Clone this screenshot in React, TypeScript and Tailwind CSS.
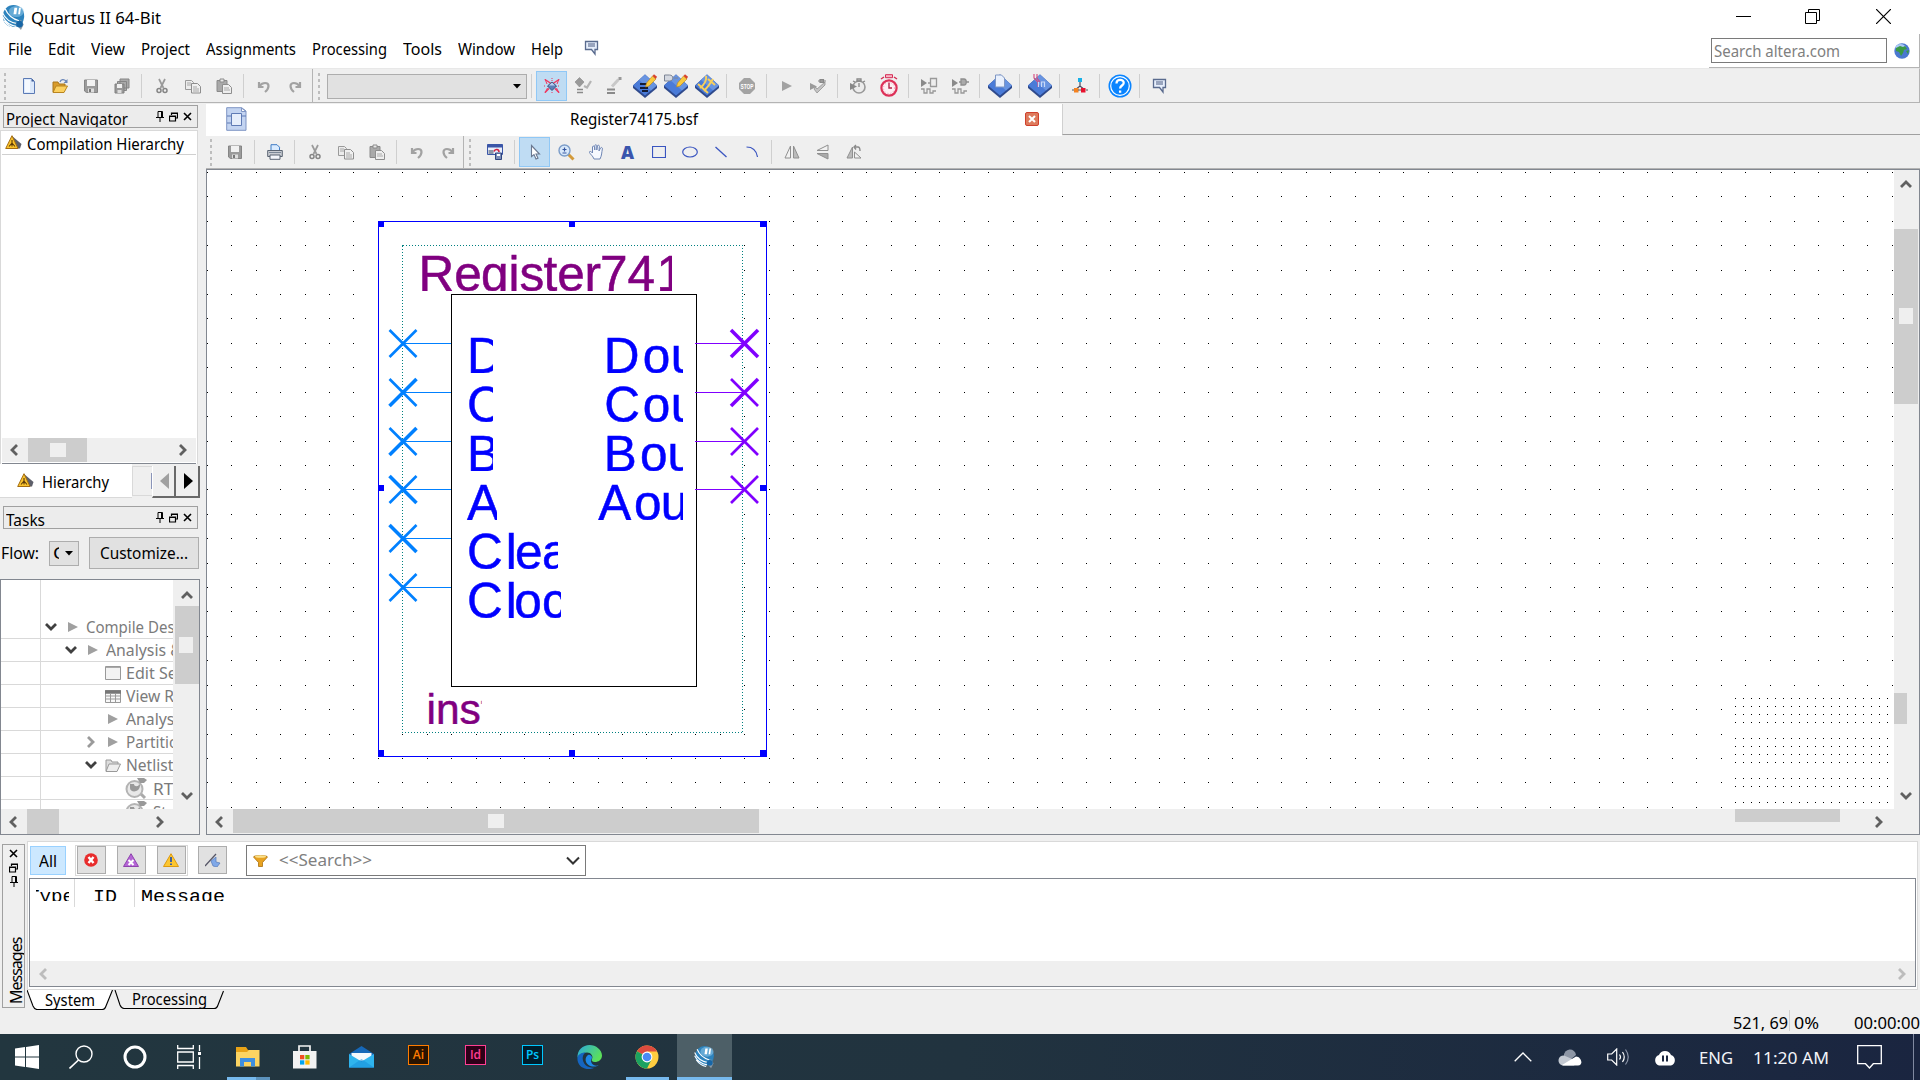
import { useLayoutEffect, useRef, type ReactNode } from "react";

const UI = "font-['Noto_Sans',sans-serif] text-[16.5px]";

/** Single line of text squeezed or stretched to a known width. */
function T({ w, c = "", f = UI, children }: { w: number; c?: string; f?: string; children: string }) {
  const ref = useRef<HTMLSpanElement>(null);
  useLayoutEffect(() => {
    const el = ref.current;
    if (el && el.offsetWidth) el.style.transform = `scaleX(${w / el.getBoundingClientRect().width})`;
  }, [w]);
  return (
    <span className={"block shrink-0 leading-[20px] h-[20px] " + f + " " + c} style={{ width: w }}>
      <span ref={ref} className="inline-block origin-left whitespace-pre">{children}</span>
    </span>
  );
}

function Ic({ w = 16, h = 16, vb, children, c = "" }: { w?: number; h?: number; vb?: string; children: ReactNode; c?: string }) {
  return (
    <svg width={w} height={h} viewBox={vb ?? `0 0 ${w} ${h}`} className={"block shrink-0 " + c} fill="none">
      {children}
    </svg>
  );
}

const Cell = ({ children, on }: { children: ReactNode; on?: boolean }) => (
  <div className={"flex h-[30px] w-[31px] shrink-0 items-center justify-center " + (on ? "border border-[#90c8f6] bg-[#bfdcf3]" : "")}>{children}</div>
);
const Sep = () => (
  <div className="flex w-[9px] shrink-0 justify-center"><div className="h-[24px] w-px bg-[#cfcfcf]" /></div>
);
const Grip = () => (
  <div className="flex w-[3px] shrink-0 flex-col gap-[3px]">
    {[0, 1, 2, 3, 4].map((i) => <div key={i} className="h-[3px] w-[2px] bg-[#bdbdbd]" />)}
  </div>
);

const Chevron = ({ d, color = "#606060" }: { d: "l" | "r" | "u" | "d"; color?: string }) => {
  const p = { l: "M11 2 6 7l5 5", r: "M4 2l5 5-5 5", u: "M2 10l5-5 5 5", d: "M2 4l5 5 5-5" }[d];
  return <Ic w={14} h={14}><path d={p} stroke={color} strokeWidth="2.8" /></Ic>;
};

const NewIcon = () => <Ic><path d="M2.5.5h8l3 3v12h-11z" fill="#dce9fb" stroke="#5b7ab5" /><path d="M4 2h5v12H4z" fill="#fff" opacity=".7" /><path d="M10.5.5v3h3z" fill="#3f5e9c" /></Ic>;
const OpenIcon = () => <Ic><path d="M1 14V4h5l1 2h6v3" fill="#d99b2a" stroke="#a8761c" /><path d="M1 14.5 4 8h11.5L12 14.5z" fill="#fbd060" stroke="#b98520" /><path d="M8 4c1-3 4-3 6-1" stroke="#6a86b8" strokeWidth="1.3" /><path d="M15.5 1v4h-4z" fill="#6a86b8" /></Ic>;
const SaveIcon = () => <Ic><path d="M1.500 2h13v12.500h-11l-2-1.500z" fill="#9b9b9b" stroke="#858585" /><path d="M4 2h8v6H4z" fill="#f2f2f2" /><path d="M5 10.500h6v4H5z" fill="#dedede" /><path d="M6 11h2v3H6z" fill="#777" /></Ic>;
const SaveAllIcon = () => <Ic><path d="M6 1h9v9H6zM3.500 3.500h9v9h-9z" fill="#aaa" stroke="#858585" /><path d="M1 6h9v9H1z" fill="#999" stroke="#808080" /><path d="M3 6h5v4H3z" fill="#f0f0f0" /><path d="M3.500 12h4v3h-4z" fill="#ddd" /></Ic>;
const CutIcon = () => <Ic c="ml-px"><path d="M5 1l4.500 9M11 1 6.500 10" stroke="#9a9a9a" strokeWidth="1.700" /><circle cx="5" cy="12.500" r="2" stroke="#858585" strokeWidth="1.500" /><circle cx="11" cy="12.500" r="2" stroke="#858585" strokeWidth="1.500" /></Ic>;
const CopyIcon = () => <Ic c="ml-px"><path d="M.5 2.500h6l2 2v7h-8z" fill="#ececec" stroke="#9a9a9a" /><path d="M6.500 5.500h6l3 3v6.500h-9z" fill="#f0f0f0" stroke="#8e8e8e" /><path d="M2 5h4M2 7h4M8 9h4M8 11h6M8 13h6" stroke="#a8a8a8" /></Ic>;
const PasteIcon = () => <Ic><path d="M1 2.500h10v11H1z" fill="#a9a9a9" stroke="#8a8a8a" /><path d="M4 1h4v3H4z" fill="#e8e8e8" stroke="#8a8a8a" /><path d="M6.500 6.500h6l3 3v6h-9z" fill="#eee" stroke="#8e8e8e" /><path d="M8 10h5M8 12h6" stroke="#aaa" /></Ic>;
const UndoIcon = () => <Ic><path d="M3 4v5h4.500M3.500 8c3-4 9-4 9 0 0 2-1 4-3.500 6" stroke="#a2a2a2" strokeWidth="2.200" /></Ic>;
const RedoIcon = () => <Ic><path d="M13 4v5H8.500M12.500 8c-3-4-9-4-9 0 0 2 1 4 3.500 6" stroke="#a2a2a2" strokeWidth="2.200" /></Ic>;
const ChatIcon = () => <Ic><path d="M1.500 1.500h12v8h-2.500v4.500L7.500 9.500h-6z" fill="#e6eefb" stroke="#5a6b8e" strokeWidth="1.300" /><path d="M4 4h7M4 6h7" stroke="#4a5a80" /></Ic>;
const StarIcon = () => <Ic><path d="M1 1.500l6 4M15 1.500l-6 4M1 14.500l4-4M15 14.500l-4-4" stroke="#ee3860" strokeWidth="1.500" /><path d="M1 1l2 5M15 1l-2 5M1 15l2.500-5M15 15l-2.500-5" stroke="#ee3860" /><path d="M8 0v3M8 14v2M0 8h2M14 8h2" stroke="#e8345a" strokeDasharray="1 1" /><path d="M3.500 8 8 4l4.500 4L8 12.500z" fill="#5d7fb8" stroke="#39537e" /><path d="M5 7.500 8 4.500l3 3z" fill="#bcd0f0" /></Ic>;
const GrayGem = () => <Ic w={18} h={20}><path d="M1 6 5.500 1.500 10 6 5.500 11z" fill="#999" stroke="#888" strokeWidth=".6" /><path d="M10 10l3 1.500L17 5" stroke="#b4b4b4" strokeWidth="2.200" /><path d="M3 13.500h6M3 16.500h6" stroke="#8a8a8a" strokeWidth="1.500" /></Ic>;
const GrayPen = () => <Ic w={18} h={20}><path d="M7 10.500l6.500-7" stroke="#c8c8c8" strokeWidth="3" /><path d="M13.500 2.500h3" stroke="#999" strokeWidth="3" /><path d="M2 13.500h8M2 17h8" stroke="#8a8a8a" strokeWidth="2" /></Ic>;
const Gem = ({ children }: { children?: ReactNode }) => (
  <Ic w={24} h={24}>
    <path d="M0 11.500 12 .5l12 11V14L12 24 0 14z" fill="#2f4a8c" />
    <path d="M0 11.500 12 .5l12 11L12 21.500z" fill="#4a7bd8" />
    <path d="M12 .5l12 11-6 5L6 6z" fill="#86ade9" opacity=".5" />
    {children}
  </Ic>
);
const Pencil = () => <><path d="M12.500 13l1-4 6-7 3.500 3-7 7z" fill="#f9c93e" stroke="#b5831b" strokeWidth=".6" /><path d="M19.500 2 21 .3l3 2.500L22.800 5z" fill="#d8432c" /></>;
const StopIcon = () => <Ic><path d="M5 0h6l5 5v6l-5 5H5l-5-5V5z" fill="#a3a3a3" /><text x="8" y="11" fontSize="7.500" fontWeight="bold" textAnchor="middle" textLength="13" lengthAdjust="spacingAndGlyphs" fill="#fff" fontFamily="Liberation Sans">STOP</text></Ic>;
const PlayIcon = () => <Ic w={12} h={12}><path d="M1 1l10 5L1 11z" fill="#a2a2a2" /></Ic>;
const CheckGray = () => <Ic><path d="M0 5l7 3.500L0 12z" fill="#9a9a9a" /><path d="M4 11l3 4 8-8V4l-8 7-1.500-2z" fill="#c4c4c4" stroke="#888" strokeWidth=".7" /><path d="M8 3h2M14 3h2M10 1.500h3.500v3H10z" fill="#999" stroke="#888" strokeWidth="1.200" /></Ic>;
const WatchGray = () => <Ic><circle cx="9" cy="9" r="6" fill="#ececec" stroke="#999" strokeWidth="1.600" /><path d="M9 5v4M7 1h4v2H7zM3 3l2 1M15 3l-2 1" stroke="#888" strokeWidth="1.300" /><path d="M0 5l7 3.500L0 12z" fill="#888" /></Ic>;
const Stopwatch = () => <Ic w={18} h={24}><path d="M5.500.7h7v3h-7z" fill="#f8b8c8" stroke="#d42c54" /><path d="M1 5l3-2M17 5l-3-2" stroke="#d42c54" strokeWidth="1.500" /><circle cx="9" cy="14" r="7.600" fill="#fdeef2" stroke="#dd3158" strokeWidth="2.200" /><path d="M9 8.500V14h3" stroke="#b32348" strokeWidth="1.400" /><circle cx="9" cy="14" r="5.500" stroke="#e6a0b2" strokeDasharray="1 2" /></Ic>;
const SimA = ({ plug }: { plug?: boolean }) => <Ic w={18} h={18}><path d="M1 2l6 4-6 4z" fill="#8a8a8a" />{plug ? <path d="M8 5h2M15 5h3M10 2h3c3 0 3 6 0 6h-3z" fill="#aaa" stroke="#8e8e8e" strokeWidth="1.300" /> : <path d="M8 6h3M10.500 1.500h6v8h-6z" fill="#eee" stroke="#999" strokeWidth="1.300" />}<path d="M1 12h3v4h3v-4h3v4h3v-2h3" stroke="#999" strokeWidth="1.300" /></Ic>;
const NodesIcon = () => <Ic><path d="M8 3v5M3 12l5-4 5 4" stroke="#4a4a60" strokeWidth="1.200" /><path d="M6 0h4v4H6z" fill="#16b0e8" /><path d="M2 10h4.500v4.500H2z" fill="#f58220" /><path d="M9 10h4.500v4.500H9z" fill="#e8112d" /><path d="M0 12h2M6 12h3M14 12h2" stroke="#555" /></Ic>;
const HelpIcon = () => <Ic w={24} h={24}><circle cx="12" cy="12" r="11.500" fill="#0a84ff" /><circle cx="12" cy="12" r="9.300" stroke="#fff" strokeWidth="1.200" /><path d="M8.500 9.500c0-5 7.500-4.500 7.200-.5-.2 2.500-3.500 2.600-3.600 5.500M12.100 16.500v2.300" stroke="#fff" strokeWidth="2.300" /></Ic>;
const PrintIcon = () => <Ic><path d="M4 6V.7h6l2.500 2.500V6" fill="#d9ebff" stroke="#3f7cc4" /><path d="M.7 6.500h14.600v6H.7z" fill="#c9ccd2" stroke="#5a6472" /><path d="M3 11h10v4.300H3z" fill="#f4f6fa" stroke="#5a6472" /><path d="M2 8.500h12" stroke="#7b8796" /></Ic>;
const WinIcon = () => <Ic><path d="M.5.5h15v10H.5z" fill="#e8eefb" stroke="#3b56a8" /><path d="M.5.5h15v3H.5z" fill="#3b56a8" /><path d="M1.500 6h5v4h-5z" fill="#8d97a8" /><path d="M7 7.500c1-3 5-2.500 5 .5" stroke="#d02040" strokeWidth="1.600" /><path d="M9.500 9h5v6.500h-6V9z" fill="#7d8fb8" stroke="#2f4580" /><path d="M10 10h3v2h-3z" fill="#fff" /></Ic>;
const PointerIcon = () => <Ic c="ml-px"><path d="M4.500 1.500v11l2.500-2 2 4.500 2-.8-2-4.200h3.500z" fill="#fff" stroke="#6a7890" strokeWidth="1.100" /></Ic>;
const ZoomIcon = () => <Ic w={17} h={17} c="ml-px"><path d="M10 10l5.500 5.500" stroke="#d39a3a" strokeWidth="3" /><circle cx="6.500" cy="6.500" r="5.500" fill="#d8e8fa" stroke="#7b9cc8" strokeWidth="1.400" /><path d="M6.500 3.500v4M4.500 5.500h4M4.500 9h4" stroke="#3556a0" strokeWidth="1.200" /></Ic>;
const HandIcon = () => <Ic c="ml-px"><path d="M5 15c-1-3-4-5-4.500-6.500C0 7 2 7 3.500 9V3c0-1.200 1.700-1.200 2 0l.3 3V1.700c0-1.300 1.900-1.300 2 0V6l.6-4c.2-1.200 2-1 2 .3L10 7l1.500-3c.6-1 2.200-.5 1.900.8C12.500 9 13 11 11 15z" fill="#f6f9ff" stroke="#6f86b4" /></Ic>;
const FlipH = () => <Ic><path d="M6.500 2v12H1z" fill="#f2f2f2" stroke="#909090" /><path d="M9.500 2v12H15z" fill="#bbb" stroke="#909090" /></Ic>;
const FlipV = () => <Ic><path d="M13 1v5.500H2z" fill="#f2f2f2" stroke="#909090" /><path d="M13 15V9.500H2z" fill="#aaa" stroke="#909090" /></Ic>;
const RotIcon = () => <Ic><path d="M6.500 3v11H1z" fill="#bbb" stroke="#909090" /><path d="M8.500 8v6H15z" fill="#f2f2f2" stroke="#909090" /><path d="M8 3h4c2 0 2 2 2 4M10 1 8 3l2 2.500" stroke="#8a8a8a" strokeWidth="1.400" /></Ic>;
const FlagTriangle = () => <Ic w={17} h={15}><path d="M7 1l9.500 8-1.500 4.500H9z" fill="#5d5f6a" /><path d="M7 .7 13 13.500H.7z" fill="#fbc42c" stroke="#a36c10" /><path d="M7 5v3l-3 3.500M7 8l3 3.500M7 8v3.500" stroke="#5c3a08" strokeWidth="1.100" /></Ic>;
const Globe = () => <Ic><circle cx="8" cy="8" r="7.700" fill="#4a78d0" /><ellipse cx="6.500" cy="4.500" rx="5" ry="3.500" fill="#a9c8f4" /><path d="M2 5l4-2 3 1 2-1 2 3-3 1-1 3-2 3-2-4-3-1z" fill="#3a9a44" /><path d="M12 8l3-1-1 4z" fill="#3a9a44" /></Ic>;
const QuartusLogo = ({ w = 24, h = 28 }: { w?: number; h?: number }) => (
  <Ic w={w} h={h} vb="0 0 24 28">
    <ellipse cx="12" cy="12" rx="11.500" ry="12" fill="#2d83bd" />
    <ellipse cx="15" cy="7" rx="8" ry="6" fill="#7cb9e0" opacity=".7" />
    <path d="M0 8c3 7 8 11 16 12M0 12c3 6 8 10 15 11M2 17c3 4 7 7 12 8M3 4c3 7 8 11 15 13" stroke="#fff" strokeWidth="1.300" />
    <path d="M13 3h3l-1 7h-3zM18 3h2l-1 7h-2z" fill="#fff" />
    <path d="M14 20l6-4 3 5-3 6z" fill="#8c9aa6" /><circle cx="18.500" cy="20.500" r="3.600" fill="#1766a6" />
  </Ic>
);
const PinI = () => <Ic w={8} h={11}><path d="M2 .5h4.500v6H2zM0 6.500h8M4 7v4" stroke="#000" /><path d="M5.500 1v5" stroke="#000" /></Ic>;
const FloatI = () => <Ic w={9} h={10}><path d="M2.500 3V1h6v5H7M2.500 1.500h6M.5 4h6v5h-6zM.5 4.500h6" stroke="#000" strokeWidth="1.200" /></Ic>;
const XI = () => <Ic w={9} h={9}><path d="M1 1l7 7M8 1 1 8" stroke="#000" strokeWidth="1.600" /></Ic>;

function DockTitle({ title, w }: { title: string; w: number }) {
  return (
    <div className="ml-[3px] flex h-[23px] w-[195px] items-start overflow-hidden border border-[#a0a0a0] bg-[#ececec] pl-[2px]">
      <T w={w} c="mt-[3px]">{title}</T>
      <div className="ml-auto mr-[5px] mt-[5px] flex items-center gap-[5px]"><PinI /><FloatI /><XI /></div>
    </div>
  );
}

const menu: [string, number][] = [["File", 24], ["Edit", 27], ["View", 34], ["Project", 49], ["Assignments", 90], ["Processing", 75], ["Tools", 39], ["Window", 57], ["Help", 32]];

function MainToolbar() {
  return (
    <div className="flex h-[35px] items-center border-t border-b border-t-[#e8e8e8] border-b-[#b4b4b4] border-r border-r-[#b4b4b4] bg-[#efefef] pt-px">
      <div className="ml-[4px]"><Grip /></div>
      <div className="ml-[6px] flex items-center">
        <Cell><NewIcon /></Cell><Cell><OpenIcon /></Cell><Cell><SaveIcon /></Cell><Cell><SaveAllIcon /></Cell><Sep />
        <Cell><CutIcon /></Cell><Cell><CopyIcon /></Cell><Cell><PasteIcon /></Cell><Sep />
        <Cell><UndoIcon /></Cell><Cell><RedoIcon /></Cell>
      </div>
      <div className="ml-[2px] h-[34px] w-px bg-[#b4b4b4]" />
      <div className="ml-[5px]"><Grip /></div>
      <div className="ml-[6px] flex h-[25px] w-[200px] items-center justify-end border border-[#adadad] bg-[#e1e1e1] pr-[5px]">
        <Ic w={8} h={5}><path d="M0 0h8L4 4.500z" fill="#000" /></Ic>
      </div>
      <Sep />
      <Cell on><StarIcon /></Cell><Cell><GrayGem /></Cell><Cell><GrayPen /></Cell>
      <Cell><Gem><path d="M7 10h8M7 14h8M9 17h6" stroke="#141c34" strokeWidth="1.800" /><Pencil /></Gem></Cell>
      <Cell><Gem><path d="M.5 1h5c4.500 0 4.500 6 0 6h-5zM10 4h4" fill="#d4d8e0" stroke="#7c8494" /><Pencil /></Gem></Cell>
      <Cell><Gem><path d="M3 10l10 9M13 5l7 6M11 2c1 5-1 8-6 12M18 5c-3 5-5 8-9 12" stroke="#f8cf5c" strokeWidth="2" /></Gem></Cell>
      <Sep /><Cell><StopIcon /></Cell><Sep /><Cell><PlayIcon /></Cell><Cell><CheckGray /></Cell>
      <Sep /><Cell><WatchGray /></Cell><Cell><Stopwatch /></Cell>
      <Sep /><Cell><SimA /></Cell><Cell><SimA plug /></Cell>
      <Sep /><Cell><Gem><path d="M7.500 1h6l3 3v9h-9z" fill="#eaf1fd" stroke="#7f97c4" /></Gem></Cell>
      <Sep /><Cell><Gem><path d="M6 0v4l4 4v5M9 0v4l3 4" stroke="#d4487c" strokeWidth="1.100" /><path d="M10.500 8v5M13.500 13V8h3v5" stroke="#c7d9f8" strokeWidth="1.200" /></Gem></Cell>
      <Sep /><Cell><NodesIcon /></Cell><Sep /><Cell><HelpIcon /></Cell><Sep /><Cell><ChatIcon /></Cell>
    </div>
  );
}

type TaskRow = { label: string; w: number; open?: "d" | "r"; pad: string; icon: ReactNode };
const Tri = () => <Ic w={12} h={12} c="mr-[3px]"><path d="M1 1l10 5L1 11z" fill="#a0a0a0" /></Ic>;
const rows: TaskRow[] = [
  { label: "Compile Design", w: 111, open: "d", pad: "pl-[3px]", icon: <Tri /> },
  { label: "Analysis & Synthesis", w: 150, open: "d", pad: "pl-[23px]", icon: <Tri /> },
  { label: "Edit Settings", w: 94, pad: "pl-[43px]", icon: <Ic w={16} h={14} c="mr-[3px]"><path d="M.5.5h15v13H.5z" fill="#f3f3f3" stroke="#999" /><path d="M1 1.500h14" stroke="#aaa" /></Ic> },
  { label: "View Report", w: 88, pad: "pl-[43px]", icon: <Ic w={16} h={13} c="mr-[3px]"><path d="M.5.5h15v12H.5z" fill="#f8f8f8" stroke="#999" /><path d="M0 2h16" stroke="#777" strokeWidth="3.500" /><path d="M1 6h14M1 9h14M5.500 4v9M10.500 4v9" stroke="#999" /></Ic> },
  { label: "Analysis & Elaboration", w: 165, pad: "pl-[43px]", icon: <Tri /> },
  { label: "Partition Merge", w: 112, open: "r", pad: "pl-[43px]", icon: <Tri /> },
  { label: "Netlist Viewers", w: 108, open: "d", pad: "pl-[43px]", icon: <Ic w={16} h={13} c="mr-[3px]"><path d="M1 12V1h5l1 2h6v2" fill="#ddd" stroke="#999" /><path d="M1 12.500 4 5h11.500L12 12.500z" fill="#eee" stroke="#999" /></Ic> },
];
const Lens = () => <Ic w={22} h={22}><path d="M14 15l6 6" stroke="#aaa" strokeWidth="3" /><circle cx="9.500" cy="12" r="8" fill="#e8e8e8" stroke="#b4b4b4" strokeWidth="2" /><path d="M5 7h4c0 3 5 3 5 0l1 1c0 8-10 8-10 3z" fill="#999" /><path d="M12 1h7l3 2-3 3h-4z" fill="#999" /></Ic>;

function LeftDock() {
  return (
    <div className="flex h-full w-[206px] shrink-0 flex-col pt-[2px]">
      <DockTitle title="Project Navigator" w={122} />
      <div className="mt-[2px] flex h-[334px] w-[198px] flex-col border border-b-0 border-[#d9d9d9] bg-white px-px">
        <div className="flex h-[24px] items-center border-b border-[#d0d0d0] pl-[3px]">
          <FlagTriangle /><T w={157} c="ml-[5px] mt-[2px]">Compilation Hierarchy</T>
        </div>
        <div className="mt-auto flex h-[24px] items-center bg-[#efefef]">
          <div className="w-[26px] pl-[4px]"><Chevron d="l" /></div>
          <div className="flex h-full w-[59px] items-center justify-center bg-[#cdcdcd]"><div className="h-[14px] w-[16px] bg-[#efefef]" /></div>
          <div className="ml-auto mr-[6px]"><Chevron d="r" /></div>
        </div>
        <div className="mt-px h-px bg-[#828790]" />
      </div>
      <div className="flex h-[34px] w-[200px]">
        <div className="flex w-[132px] items-center border-b border-[#d9d9d9] bg-white pl-[17px]"><FlagTriangle /><T w={67} c="ml-[8px] mt-[2px]">Hierarchy</T></div>
        <div className="mt-[2px] flex h-[30px] w-[20px] items-center justify-end border border-r-0 border-[#d9d9d9]"><div className="h-[16px] w-px bg-[#8a94b8]" /></div>
        <div className="mt-[2px] flex w-[24px] items-center justify-center border-r-2 border-b-2 border-l border-[#696969] border-l-white pl-px"><Ic w={9} h={16}><path d="M9 0v16L0 8z" fill="#a0a0a0" /></Ic></div>
        <div className="mt-[2px] flex w-[24px] items-center justify-center border-r-2 border-b-2 border-[#696969] pl-[2px]"><Ic w={9} h={16}><path d="M0 0v16l9-8z" fill="#000" /></Ic></div>
      </div>
      <div className="h-[8px]" />
      <DockTitle title="Tasks" w={39} />
      <div className="mt-[8px] flex h-[32px] items-center pl-[1px]">
        <T w={38}>Flow:</T>
        <div className="ml-[10px] flex h-[25px] w-[30px] items-center border border-[#adadad] bg-[#e1e1e1] pl-[3px]">
          <div className="w-[6px] overflow-hidden"><T w={12}>C</T></div>
          <Ic w={8} h={5} c="ml-[6px]"><path d="M0 0h8L4 4.500z" fill="#000" /></Ic>
        </div>
        <div className="ml-[10px] flex h-[32px] w-[110px] items-center justify-center border border-[#adadad] bg-[#e1e1e1]"><T w={88}>Customize...</T></div>
      </div>
      <div className="mt-[10px] flex h-[256px] w-[200px] flex-col border border-[#828790]">
        <div className="flex h-[229px]">
          <div className="flex h-full w-[172px] flex-col overflow-hidden bg-white">
            <div className="flex h-[36px] shrink-0"><div className="w-[40px] border-r border-[#d9d9d9]" /></div>
            {rows.map((r) => (
              <div key={r.label} className="flex h-[23px] shrink-0 border-b border-[#d9d9d9]">
                <div className="w-[40px] shrink-0 border-r border-[#d9d9d9]" />
                <div className={"flex items-center " + r.pad}>
                  <div className="w-[14px] shrink-0">
                    {r.open && <Chevron d={r.open} color={r.open === "d" ? "#404040" : "#9a9a9a"} />}
                  </div>
                  <div className="ml-[6px] flex w-[20px] shrink-0 items-center justify-center">{r.icon}</div>
                  <T w={r.w} c="ml-[2px] text-[#7b7b7b]">{r.label}</T>
                </div>
              </div>
            ))}
            {[["RTL Viewer", 88], ["State Machine", 100]].map(([l, w]) => (
              <div key={l} className="flex h-[23px] shrink-0 border-b border-[#d9d9d9]">
                <div className="w-[40px] shrink-0 border-r border-[#d9d9d9]" />
                <div className="flex items-center pl-[84px]"><Lens /><T w={w as number} c="ml-[6px] mt-px text-[#7b7b7b]">{l as string}</T></div>
              </div>
            ))}
          </div>
          <div className="ml-auto flex h-full w-[24px] flex-col items-center bg-[#efefef] pr-px">
            <div className="flex h-[26px] items-center pt-[3px]"><Chevron d="u" /></div>
            <div className="ml-px flex h-[78px] w-[24px] items-center justify-center bg-[#cdcdcd] pr-[2px]"><div className="h-[16px] w-[14px] bg-[#efefef]" /></div>
            <div className="mt-auto mb-[6px]"><Chevron d="d" /></div>
          </div>
        </div>
        <div className="flex h-[25px] items-center bg-[#efefef]">
          <div className="w-[26px] pl-[4px]"><Chevron d="l" /></div>
          <div className="h-full w-[32px] bg-[#cdcdcd]" />
          <div className="ml-auto mr-[32px]"><Chevron d="r" /></div>
        </div>
      </div>
    </div>
  );
}

const PITCH = 24.415;
const gridPath = (() => {
  let d = "";
  for (let i = 0; i <= 69; i++)
    for (let j = 0; j <= 26; j++) {
      const x = Math.round(207 + i * PITCH), y = Math.round(172 + j * PITCH);
      if (x >= 378 && x <= 744 && y >= 221 && y <= 733 && !(x === 744 && y > 221)) continue;
      if (x === 378 && y === 734) continue;
      if (x > 1730 && y > 697) continue;
      d += `M${x} ${y}h1v1h-1z`;
    }
  for (let x = 1735; x <= 1887; x += 8)
    for (const y of [698, 706, 714, 722, 738, 746, 754, 762, 778, 786, 802]) d += `M${x} ${y}h1v1h-1z`;
  return d;
})();

type Label = { t: string; xs: string; base: number; right: number; size?: number; color?: string };
const labels: Label[] = [
  { t: "Register741", xs: "418.5 454.3 481 508.500 519.6 543.6 557.2 584.5 600.1 627.5 656.5", base: 291, right: 672, size: 49.500, color: "#800080" },
  { t: "D", xs: "467", base: 373, right: 493 },
  { t: "C", xs: "467", base: 422, right: 493 },
  { t: "B", xs: "467", base: 471, right: 493 },
  { t: "A", xs: "467", base: 520, right: 497 },
  { t: "Clea", xs: "467 505.7 515 542", base: 569, right: 558 },
  { t: "Cloc", xs: "467 505.7 514.3 542", base: 618, right: 561 },
  { t: "Dou", xs: "603.8 642.7 670.8", base: 373, right: 683 },
  { t: "Cou", xs: "604.2 642.7 670.8", base: 422, right: 683 },
  { t: "Bou", xs: "603.8 640 667.5", base: 471, right: 683 },
  { t: "Aou", xs: "598.3 634 660.8", base: 520, right: 683 },
  { t: "inst", xs: "426.5", base: 724, right: 481.500, size: 42.500, color: "#800080" },
];
const inPins: [number, number, number][] = [[343, 2.600, 2.600], [392, 2.600, 3.500], [441, 2.600, 3.500], [489, 3.500, 2.600], [538, 3.500, 2.600], [587, 2.600, 2.600]];
const outPins: [number, number, number][] = [[343, 3.500, 3.500], [392, 2.600, 3.500], [441, 2.600, 2.600], [489, 2.600, 2.600]];

function Pin({ cx, y, a, b, color, x1, x2 }: { cx: number; y: number; a: number; b: number; color: string; x1: number; x2: number }) {
  return (
    <g stroke={color}>
      <path d={`M${x1} ${y + 0.5}H${x2}`} strokeWidth="1" />
      <path d={`M${cx - 13} ${y - 13}l27 27`} strokeWidth={a} />
      <path d={`M${cx - 13} ${y + 14}l27-27`} strokeWidth={b} />
    </g>
  );
}

function Schematic() {
  return (
    <svg width="1687" height="639" viewBox="207 170 1687 639" className="block shrink-0 bg-white" fill="none">
      <path d={gridPath} fill="#000" shapeRendering="crispEdges" />
      <rect x="402.500" y="245.500" width="340" height="487" stroke="#008080" strokeDasharray="1 2" shapeRendering="crispEdges" />
      <rect x="451.500" y="294.500" width="245" height="392" stroke="#000" fill="#fff" />
      <rect x="378.500" y="221.500" width="388" height="535" stroke="#0000ff" />
      {[378, 569, 760].map((x) => [221, 485, 750].map((y) => (x === 569 && y === 485 ? null : <rect key={x + "-" + y} x={x} y={y} width={x === 760 ? 7 : 6} height="6" fill="#0000ff" />)))}
      {inPins.map(([y, a, b]) => <Pin key={y} cx={402.500} y={y} a={a} b={b} color="#0080ff" x1={403} x2={451} />)}
      {outPins.map(([y, a, b]) => <Pin key={y} cx={744} y={y} a={a} b={b} color="#8000ff" x1={695} x2={745} />)}
      {labels.map((l) => (
        <svg key={l.t + l.base} x="400" y={l.base - 42} width={l.right - 400} height="42" viewBox={`400 ${l.base - 42} ${l.right - 400} 42`}>
          <text x={l.xs} y={l.base} fontSize={l.size ?? 49.500} fill={l.color ?? "#0000ff"} stroke={l.color ?? "#0000ff"} strokeWidth=".5" fontFamily="'Liberation Sans', sans-serif">{l.t}</text>
        </svg>
      ))}
    </svg>
  );
}

function Editor() {
  return (
    <div className="flex h-full w-[1714px] flex-col">
      <div className="flex h-[33px] pt-px">
        <div className="flex w-[856px] items-center bg-white pb-[2px] pl-[20px]">
          <Ic w={21} h={24}><path d="M.7.7h15L20 4v19.300H.7z" fill="#c3d4f1" stroke="#7f95c4" /><path d="M5.500 6.500h10v12h-10z" fill="#e6eefb" stroke="#5f7bb5" /><path d="M1 9h4M16 9h4M1 16h4" stroke="#5f7bb5" /><path d="M15.500 1v3.500H20z" fill="#fff" stroke="#7f95c4" /></Ic>
          <T w={128} c="ml-[323px]">Register74175.bsf</T>
          <div className="ml-[327px] flex h-[14px] w-[14px] items-center justify-center rounded-[2px] border border-[#d0402c] bg-[#dd7a5c]"><Ic w={8} h={8}><path d="M1 1l6 6M7 1 1 7" stroke="#fff" strokeWidth="2" /></Ic></div>
        </div>
        <div className="mb-px flex-1 border-b border-l border-b-[#a0a0a0] border-l-[#d0d0d0]" />
      </div>
      <div className="flex h-[33px] items-center border-b border-[#b4b4b4]">
        <div className="ml-[4px]"><Grip /></div>
        <div className="ml-[6px] flex items-center">
          <Cell><SaveIcon /></Cell><Sep /><Cell><PrintIcon /></Cell><Sep />
          <Cell><CutIcon /></Cell><Cell><CopyIcon /></Cell><Cell><PasteIcon /></Cell><Sep /><Cell><UndoIcon /></Cell><Cell><RedoIcon /></Cell>
        </div>
        <div className="h-[32px] w-px bg-[#b4b4b4]" />
        <div className="ml-[5px]"><Grip /></div>
        <div className="ml-[7px] flex items-center">
          <Cell><WinIcon /></Cell><Sep /><Cell on><PointerIcon /></Cell><Cell><ZoomIcon /></Cell><Cell><HandIcon /></Cell>
          <Cell><span className="font-['Open_Sans',sans-serif] text-[18px] font-extrabold leading-[18px] text-[#3a55ad]">A</span></Cell>
          <Cell><Ic w={14} h={12}><path d="M.5.5h13v11H.5z" stroke="#3a55c0" strokeWidth="1.200" /></Ic></Cell>
          <Cell><Ic w={16} h={12}><ellipse cx="8" cy="6" rx="7.300" ry="5" stroke="#3a55c0" strokeWidth="1.200" /></Ic></Cell>
          <Cell><Ic w={12} h={12}><path d="M.5 1l11 10" stroke="#3a55c0" strokeWidth="1.300" /></Ic></Cell>
          <Cell><Ic w={12} h={12}><path d="M.5 1c6 0 10 4 11 10" stroke="#3a55c0" strokeWidth="1.200" /></Ic></Cell>
          <Sep /><Cell><FlipH /></Cell><Cell><FlipV /></Cell><Cell><RotIcon /></Cell>
        </div>
      </div>
      <div className="flex h-[666px] flex-col border border-[#828790]">
        <div className="flex h-[639px]">
          <Schematic />
          <div className="flex flex-1 flex-col bg-[#efefef]">
            <div className="flex h-[59px] items-start justify-center pt-[7px] pr-px"><Chevron d="u" /></div>
            <div className="mr-px flex h-[175px] items-center justify-center bg-[#cdcdcd] pb-[2px]"><div className="h-[16px] w-[14px] bg-[#efefef]" /></div>
            <div className="mt-[289px] h-[31px] w-[13px] bg-[#cdcdcd]" />
            <div className="mt-auto mb-[6px] flex justify-center pr-px"><Chevron d="d" /></div>
          </div>
        </div>
        <div className="flex h-[25px] bg-[#efefef]">
          <div className="flex w-[26px] items-center pl-[4px]"><Chevron d="l" /></div>
          <div className="flex h-[24px] w-[526px] items-center justify-center bg-[#cdcdcd]"><div className="h-[14px] w-[16px] bg-[#efefef]" /></div>
          <div className="ml-[976px] h-[13px] w-[105px] bg-[#cdcdcd]" />
          <div className="ml-[32px] flex items-center"><Chevron d="r" /></div>
        </div>
      </div>
    </div>
  );
}

const MsgBtn = ({ children }: { children: ReactNode }) => (
  <div className="flex h-[28px] w-[29px] items-center justify-center border border-[#adadad] bg-[#e1e1e1]">{children}</div>
);
const MONO = "font-['Liberation_Mono',monospace] text-[19px]";

function Messages() {
  return (
    <div className="flex h-[169px] w-full">
      <div className="ml-[2px] mt-[3px] flex h-[164px] w-[23px] flex-col items-center overflow-hidden border border-[#a0a0a0] pt-[4px]">
        <XI /><div className="mt-[5px]"><FloatI /></div><div className="mt-[3px]"><PinI /></div>
        <div className="mt-auto mb-[3px] flex h-[67px] w-[20px] rotate-180 [writing-mode:vertical-rl]">
          <span className="font-['Noto_Sans',sans-serif] text-[16px] leading-[25px] tracking-[-1px]">Messages</span>
        </div>
      </div>
      <div className="ml-[2px] flex w-[1891px] flex-col">
        <div className="flex h-[149px] flex-col border border-[#d9d9d9] bg-white px-[1px]">
          <div className="flex h-[36px] items-center">
            <div className="ml-px flex h-[29px] w-[36px] items-center justify-center border border-[#99d1ff] bg-[#cce8ff]"><T w={18} c="mt-px">All</T></div>
            <div className="ml-[9px] flex h-[31px] w-[113px] items-center gap-[11px] border border-[#d9d9d9] pl-px">
              <MsgBtn><Ic w={14} h={14} c="mr-px"><circle cx="7" cy="7" r="6.800" fill="#e82c2c" /><path d="M4.500 4l5 6M9.500 4l-5 6" stroke="#fff" strokeWidth="2.400" /></Ic></MsgBtn>
              <MsgBtn><Ic w={16} h={14} c="mr-px"><path d="M8 .7 15.500 13.500H.5z" fill="#b565d6" stroke="#8e44ad" /><path d="M5.500 7l5 5M10.500 7l-5 5" stroke="#fff" strokeWidth="2" /></Ic></MsgBtn>
              <MsgBtn><Ic w={16} h={14} c="mr-px"><path d="M8 .7 15.500 13.500H.5z" fill="#fcc630" stroke="#dd9a10" /><path d="M8 4v5M8 10.500v1.500" stroke="#3f5f9f" strokeWidth="2" /></Ic></MsgBtn>
            </div>
            <div className="ml-[10px]"><MsgBtn><Ic w={16} h={14}><path d="M0 13 11 1" stroke="#556" strokeWidth="1.200" /><path d="M6 8l5-4v5l4 1-3 4-4-1z" fill="#7fa8e8" stroke="#5478b8" strokeWidth=".7" /></Ic></MsgBtn></div>
            <div className="ml-[19px] flex h-[31px] w-[340px] items-center border border-[#7a7a7a] pl-[6px]">
              <Ic w={15} h={13}><path d="M.5 3C.5 1 14.500 1 14.500 3L9.500 8.500v4h-4v-4z" fill="#e8a220" stroke="#a8700f" strokeWidth=".8" /><ellipse cx="7.500" cy="2.500" rx="5.500" ry="1.300" fill="#fbe08a" /></Ic>
              <T w={93} c="ml-[11px] text-[#808080]">{"<<Search>>"}</T>
              <div className="ml-auto mr-[5px]"><Ic w={14} h={9}><path d="M1 1.500l6 6 6-6" stroke="#333" strokeWidth="2" /></Ic></div>
            </div>
          </div>
          <div className="flex h-[109px] w-[1887px] flex-col border border-[#828790]">
            <div className="flex h-[28px]">
              <div className="w-[45px] border-r border-[#d9d9d9] pl-[6px]"><div className="h-[22px] w-[33px] overflow-hidden pt-[8px]"><T w={46} f={MONO} c="ml-[-8px]">Type</T></div></div>
              <div className="flex w-[60px] justify-center border-r border-[#d9d9d9]"><div className="h-[22px] overflow-hidden pt-[8px]"><T w={24} f={MONO}>ID</T></div></div>
              <div className="h-[22px] overflow-hidden pl-[6px] pt-[8px]"><T w={84} f={MONO}>Message</T></div>
            </div>
            <div className="mt-auto flex h-[25px] items-center justify-between bg-[#efefef] pr-[6px] pl-[5px]"><Chevron d="l" color="#bcbcbc" /><Chevron d="r" color="#bcbcbc" /></div>
          </div>
        </div>
        <div className="flex h-[20px]">
          <div className="relative h-[20px] w-[87px]">
            <Ic w={87} h={20}><path d="M0 0l6 16q1.500 3.500 4 3.500h65q3 0 4-3.500L85.500 0" fill="#fff" stroke="#000" strokeWidth="1.100" /></Ic>
            <div className="absolute left-[18px] top-0"><T w={50}>System</T></div>
          </div>
          <div className="relative h-[20px] w-[110px]">
            <Ic w={110} h={20}><path d="M1 0l5 15q1.500 3.500 4 3.500h90q3 0 4-3.500L109.500 1" fill="#efefef" stroke="#000" strokeWidth="1.100" /></Ic>
            <div className="absolute left-[18px] top-[-1px]"><T w={75}>Processing</T></div>
          </div>
        </div>
      </div>
    </div>
  );
}

const Slot = ({ w, children, line, on }: { w: string; children: ReactNode; line?: string; on?: boolean }) => (
  <div className={"flex h-full shrink-0 flex-col items-center " + w + (on ? " bg-[#4d5f67]" : "")}>
    <div className="flex h-[43px] items-center justify-center pt-[3px]">{children}</div>
    {line && <div className={"h-[3px] bg-[#76b9ed] " + line} />}
  </div>
);
const Adobe = ({ t, c }: { t: string; c: string }) => (
  <div className={"mb-[4px] flex h-[20px] w-[21px] items-center justify-center border-[1.5px] font-['Open_Sans',sans-serif] text-[12px] font-semibold leading-[18px] " + c}>{t}</div>
);

function Taskbar() {
  return (
    <div className="flex h-[46px] w-full bg-gradient-to-r from-[#22363f] via-[#21333f] to-[#1a2540]">
      <Slot w="w-[54px]"><Ic w={24} h={24}><path d="M0 3.500 10 2v9.500H0zM11 1.900 24 0v11.500H11zM0 12.500h10V22L0 20.500zM11 12.500h13V24l-13-1.900z" fill="#fff" /></Ic></Slot>
      <Slot w="w-[54px]"><Ic w={24} h={24}><circle cx="15" cy="9" r="8" stroke="#fff" strokeWidth="1.400" /><path d="M9.500 15 .5 23.500" stroke="#fff" strokeWidth="1.600" /></Ic></Slot>
      <Slot w="w-[54px]"><Ic w={24} h={24}><circle cx="12" cy="12" r="10" stroke="#fff" strokeWidth="3" /></Ic></Slot>
      <Slot w="w-[54px]"><Ic w={25} h={24}><path d="M.7 0v3.500h15.600V0M.7 7h15.600v10H.7zM.7 24v-3.500h15.600V24M22.500 0v6M22.500 12v12" stroke="#fff" strokeWidth="1.300" /><path d="M21 7h3v3h-3z" fill="#fff" /></Ic></Slot>
      <Slot w="w-[65px]" line="w-[43px] border-r-[14px] border-[#5c93bd]"><Ic w={24} h={20} c="mr-px"><path d="M0 0h10l2 3h11v16H0z" fill="#e8a317" /><path d="M0 5h11l2-2h10.500v16.500H0z" fill="#fcd462" /><path d="M4 19.500V11h15v8.500h-4V15H8v4.500z" fill="#3f8fe0" /></Ic></Slot>
      <Slot w="w-[47px]"><Ic w={24} h={24}><path d="M0 6h23.500v17.500H0z" fill="#f2f2f2" /><path d="M6 6V1h11v5" stroke="#f2f2f2" strokeWidth="1.700" /><path d="M7 10h4.300v4.300H7z" fill="#f25022" /><path d="M12.300 10h4.300v4.300h-4.300z" fill="#7fba00" /><path d="M7 15.300h4.300v4.300H7z" fill="#00a4ef" /><path d="M12.300 15.300h4.300v4.300h-4.300z" fill="#ffb900" /></Ic></Slot>
      <Slot w="w-[67px]"><Ic w={25} h={22}><path d="M0 8 12.500 0 25 8v13.500H0z" fill="#1668b8" /><path d="M2.500 7h20v8h-20z" fill="#f4f8fc" /><path d="M0 8l12.500 7.500L25 8v13.500H0z" fill="#2fb4ee" /><path d="M0 21.500 12.500 13 25 21.500z" fill="#1b93dc" opacity=".6" /></Ic></Slot>
      <Slot w="w-[47px]"><Adobe t="Ai" c="border-[#ff7c00] bg-[#2a1400] text-[#ff7c00]" /></Slot>
      <Slot w="w-[67px]"><Adobe t="Id" c="border-[#ff3f93] bg-[#2e0018] text-[#ff3f93]" /></Slot>
      <Slot w="w-[47px]"><Adobe t="Ps" c="border-[#00c8ff] bg-[#001d2b] text-[#00c8ff]" /></Slot>
      <Slot w="w-[67px]"><Ic w={25} h={24}>
        <defs><linearGradient id="eg" x1="0" y1="0" x2="1" y2="0.500"><stop offset="0" stopColor="#2aa8e0" /><stop offset="1" stopColor="#5be05a" /></linearGradient></defs>
        <path d="M.5 13C0 5 6 0 12.500 0S25 5 25 10.500C25 15 21 17 18 17c-3 0-4-1.500-3-3 1.500-3-1-6.500-5-6.500-5 0-9 3-9.500 5.500z" fill="url(#eg)" />
        <path d="M.5 12.500C1 9 5 7.500 8.500 7.500c-4 3-3.500 9 0 12.500 2.500 2.500 7 3 9.500 2.500C9 27-.5 21.500.5 12.500z" fill="#1565c0" />
        <path d="M11 10c-3 2-3.500 7 .5 10 3.500 2.500 9 2 11.500-1-4 4-9 0-9-3 0-2 1-2 1-3.500S13 9 11 10z" fill="#1e88e5" />
      </Ic></Slot>
      <Slot w="w-[48px]" line="w-[43px]"><Ic w={24} h={24}><circle cx="12" cy="12" r="11.500" fill="#ffcd40" /><path d="M12 12 2 6.300A11.500 11.500 0 0 1 22 6.500H12z" fill="#dd4b3e" /><path d="M12 12 2 6.300A11.500 11.500 0 0 0 12 23.500l4-8z" fill="#1ba261" /><circle cx="12" cy="12" r="5.400" fill="#fff" /><circle cx="12" cy="12" r="4.300" fill="#4a8af4" /></Ic></Slot>
      <div className="w-[6px]" />
      <Slot w="w-[55px]" line="w-[55px]" on><QuartusLogo w={21} h={23} /></Slot>
      <div className="ml-auto flex h-full items-center text-[#f2f4f8]">
        <Ic w={18} h={10}><path d="M.7 9.300 9 1l8.300 8.300" stroke="#fff" strokeWidth="1.300" /></Ic>
        <Ic w={25} h={17} c="ml-[26px]"><path d="M6 7a6 6 0 0 1 12-1l-6 5z" fill="#8d96a5" /><path d="M5 16.500a5 5 0 0 1 1-10l14 6-4 4z" fill="#c3c9d2" /><path d="M4 16 18 7.500c5 0 8 8.500 2 9H5z" fill="#fff" /></Ic>
        <Ic w={24} h={18} c="ml-[24px]"><path d="M.7 6h4l5-5v16l-5-5h-4z" stroke="#fff" strokeWidth="1.200" /><path d="M12.500 6.500q2 2.500 0 5M15.500 4q3.500 5 0 10" stroke="#fff" strokeWidth="1.200" /><path d="M18.500 1.500q5.500 7.500 0 15" stroke="#8a93a6" strokeWidth="1.200" /></Ic>
        <Ic w={24} h={17} c="ml-[22px]"><path d="M6 16.500a5.500 5.500 0 0 1 0-10.500 6.500 6.500 0 0 1 12 0 5.500 5.500 0 0 1 0 10.500z" fill="#fff" /><path d="M10 6.500v6M14 6.500v6" stroke="#1b2740" strokeWidth="2" /></Ic>
        <T w={34} c="ml-[22px] mt-px">ENG</T>
        <T w={76} c="ml-[20px] mt-px">11:20 AM</T>
        <Ic w={25} h={24} c="ml-[28px]"><path d="M.7.7h23.600v18h-8L12.500 23l-4-4.300H.7z" stroke="#fff" strokeWidth="1.300" /></Ic>
        <div className="ml-[31px] mr-[6px] h-[46px] w-px bg-[#8089a0]" />
      </div>
    </div>
  );
}

export default function App() {
  return (
    <div className="flex h-[1080px] w-[1920px] flex-col overflow-hidden bg-[#efefef] text-black">
      <div className="flex h-[34px] items-start bg-white">
        <div className="ml-[2px] mt-[5px]"><QuartusLogo w={23} h={26} /></div>
        <T w={130} c="ml-[6px] mt-[8px]">Quartus II 64-Bit</T>
        <div className="ml-auto mr-[29px] mt-[9px] flex items-center">
          <Ic w={15} h={15}><path d="M0 7.500h15" stroke="#000" /></Ic>
          <Ic w={15} h={15} c="ml-[54px]"><path d="M.5 3.500h11v11H.5zM3.500 3.500v-3h11v11h-3" stroke="#000" /></Ic>
          <Ic w={15} h={15} c="ml-[56px]"><path d="M0 0l15 15M15 0 0 15" stroke="#000" strokeWidth="1.200" /></Ic>
        </div>
      </div>
      <div className="flex h-[34px] items-start bg-white">
        <div className="ml-[8px] mt-[5px] flex gap-[16px]">{menu.map(([t, w]) => <T key={t} w={w}>{t}</T>)}</div>
        <div className="ml-[21px] mt-[6px]"><ChatIcon /></div>
        <div className="ml-auto flex h-[34px] w-[211px] border-b border-r border-[#b4b4b4]">
          <div className="ml-[2px] mt-[4px] flex h-[25px] w-[176px] items-center border border-[#7a7a7a] pl-[2px]"><T w={126} c="text-[#808080]">Search altera.com</T></div>
          <div className="ml-[7px] mt-[9px]"><Globe /></div>
        </div>
      </div>
      <MainToolbar />
      <div className="flex h-[738px]"><LeftDock /><Editor /></div>
      <Messages />
      <div className="flex h-[24px] items-start">
        <div className="ml-auto flex h-[21px] items-end border-r border-[#d0d0d0] pr-px"><T w={55} c="mb-[-2px]">521, 69</T></div>
        <T w={25} c="ml-[4px] mt-[3px]">0%</T>
        <T w={66} c="ml-[35px] mt-[3px]">00:00:00</T>
      </div>
      <Taskbar />
    </div>
  );
}
